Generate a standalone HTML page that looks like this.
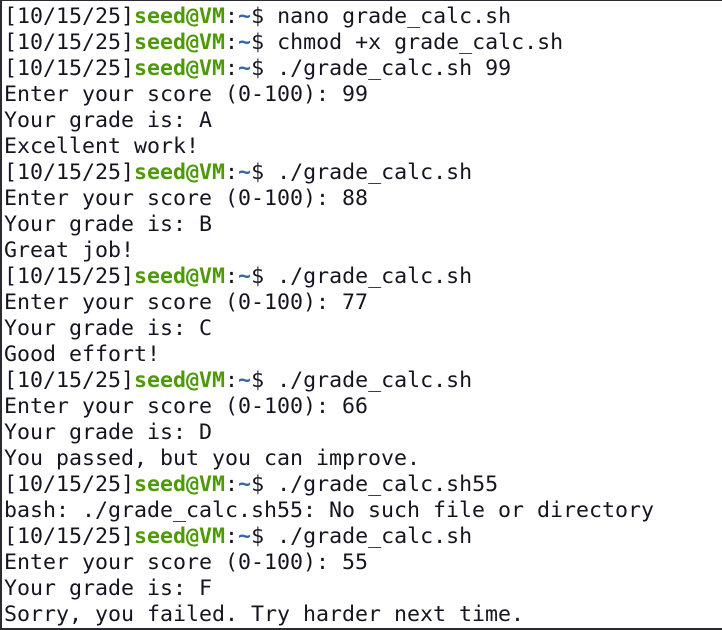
<!DOCTYPE html>
<html><head><style>
html,body{margin:0;padding:0;background:#fff;}
body{width:722px;height:630px;overflow:hidden;position:relative;}
.b{position:absolute;background:#2b2a33;}
pre{position:absolute;left:4px;top:4px;margin:0;font-family:"DejaVu Sans Mono","Liberation Mono",monospace;font-size:21.6px;line-height:26px;color:#171421;white-space:pre;}
.g{color:#4e9a06;font-weight:bold;}
.u{color:#3465a4;font-weight:bold;}
</style></head><body>
<div class="b" style="left:0;top:0;width:2px;height:630px"></div>
<div class="b" style="left:0;top:0;width:722px;height:1px"></div>
<div class="b" style="left:0;top:628px;width:722px;height:2px"></div>
<pre>[10/15/25]<span class="g">seed@VM</span>:<span class="u">~</span>$ nano grade_calc.sh
[10/15/25]<span class="g">seed@VM</span>:<span class="u">~</span>$ chmod +x grade_calc.sh
[10/15/25]<span class="g">seed@VM</span>:<span class="u">~</span>$ ./grade_calc.sh 99
Enter your score (0-100): 99
Your grade is: A
Excellent work!
[10/15/25]<span class="g">seed@VM</span>:<span class="u">~</span>$ ./grade_calc.sh
Enter your score (0-100): 88
Your grade is: B
Great job!
[10/15/25]<span class="g">seed@VM</span>:<span class="u">~</span>$ ./grade_calc.sh
Enter your score (0-100): 77
Your grade is: C
Good effort!
[10/15/25]<span class="g">seed@VM</span>:<span class="u">~</span>$ ./grade_calc.sh
Enter your score (0-100): 66
Your grade is: D
You passed, but you can improve.
[10/15/25]<span class="g">seed@VM</span>:<span class="u">~</span>$ ./grade_calc.sh55
bash: ./grade_calc.sh55: No such file or directory
[10/15/25]<span class="g">seed@VM</span>:<span class="u">~</span>$ ./grade_calc.sh
Enter your score (0-100): 55
Your grade is: F
Sorry, you failed. Try harder next time.</pre>
</body></html>
